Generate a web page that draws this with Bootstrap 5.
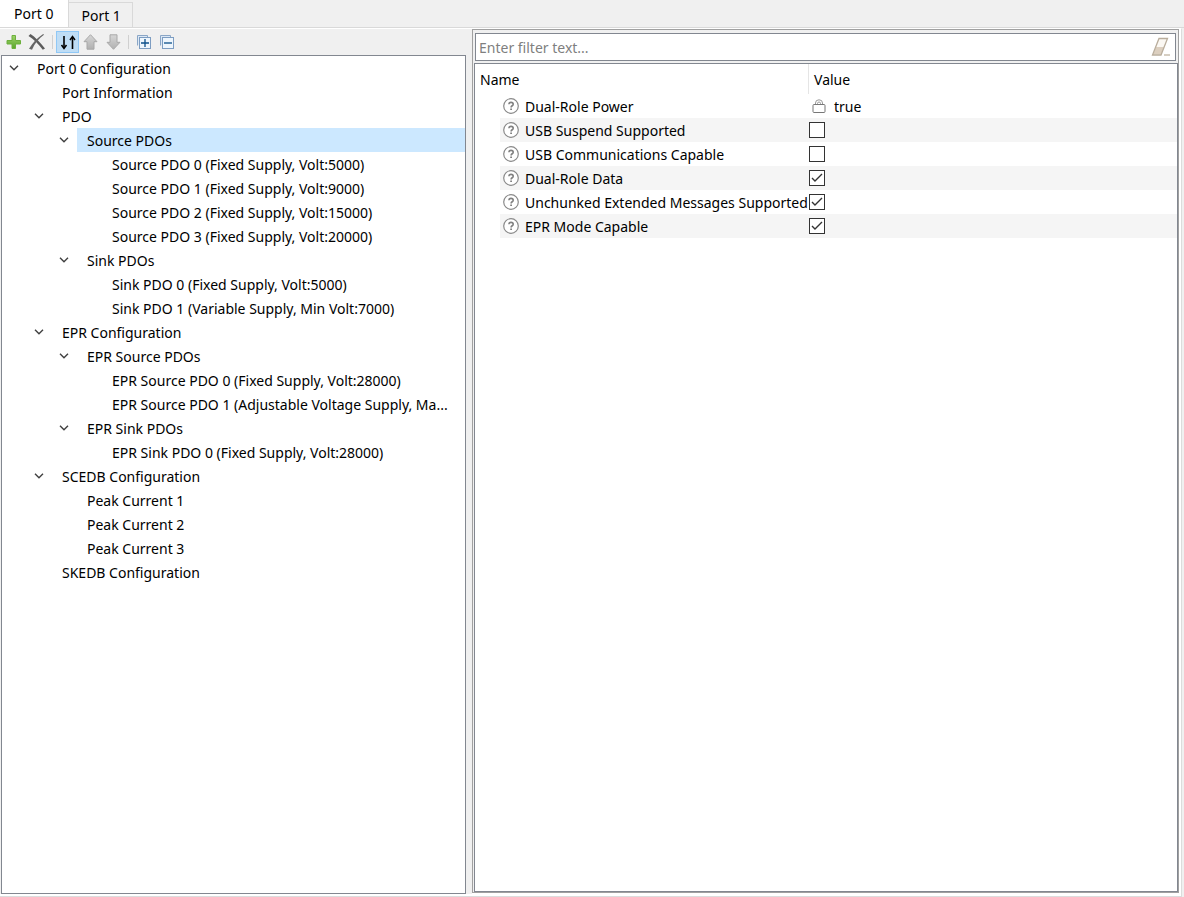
<!DOCTYPE html>
<html lang="en">
<head>
<meta charset="utf-8">
<meta name="viewport" content="width=device-width, initial-scale=1">
<title>Port Configuration</title>
<link rel="stylesheet" href="https://cdn.jsdelivr.net/npm/bootstrap@5.3.0/dist/css/bootstrap.min.css">
<script src="https://cdn.jsdelivr.net/npm/bootstrap@5.3.0/dist/js/bootstrap.bundle.min.js" defer></script>
<style>
  body { font: 14px/24px "Noto Sans", "Open Sans", sans-serif; color: #000; background: #f0f0f0; }
  svg { display: block; }

  .port-tabs { height: 28px; border-bottom: 1px solid #d9d9d9; }
  .port-tabs .nav-link { height: 25px; padding: 0 11px 0 12px; line-height: 25px; color: #000; border: 1px solid #d9d9d9; border-left: 0; border-bottom: 0; border-radius: 0; background: #f0f0f0; }
  .port-tabs .nav-link.active { height: 28px; padding: 0 15px 0 14px; line-height: 28px; background: #fff; }

  .workspace { border: 1px solid #dcdcdc; border-width: 1px 1px 1px 0; border-top-color: #fff; margin-right: 2px; padding: 0 2px 2px 0; background: #fff; }
  .tree-pane { flex: 465 1 0; background: #f0f0f0; padding-left: 1px; }
  .sash { width: 6px; background: #f0f0f0; }
  .prop-pane { flex: 704 1 0; border: 1px solid #a0a0a0; background: #f0f0f0; padding: 1px 0 0 1px; margin-bottom: 1px; }

  .tool-strip { height: 26px; padding: 2px 0 2px 1px; }
  .tool-strip button { width: 23px; height: 22px; padding: 0; border: 1px solid transparent; background: none; display: flex; align-items: center; justify-content: center; }
  .tool-strip button.on { background: #bfddf5; border-color: #90c8f6; }
  .tool-strip .divider { width: 1px; height: 14px; margin: 0 3px; background: #d0d0d0; }

  .sunken { border: 1px solid #828790; background: #fff; }
  .tree ul { list-style: none; margin: 0; padding: 0 0 0 25px; }
  .tree > ul { padding: 0; }
  .node { display: flex; height: 24px; white-space: nowrap; }
  .node .twisty { width: 25px; height: 24px; flex: none; padding: 0 0 0 7px; border: 0; background: none; }
  .node .caption { flex: 1; min-width: 0; overflow: hidden; padding-left: 10px; line-height: 26px; color: #000; text-decoration: none; }
  .node .caption.selected { background: #cce8ff; }

  .filter-box { height: 28px; border: 1px solid #828790; margin: 2px 2px 2px 1px; background: #fff; }
  .filter-box input { font: inherit; height: 26px; padding: 0 3px; border: 0; outline: 0; background: none; }
  .filter-box input::placeholder { color: #7f7f7f; opacity: 1; }
  .filter-box button { padding: 0 4px 0 0; border: 0; background: none; }

  .props { width: 100%; table-layout: fixed; border-collapse: separate; border-spacing: 0; }
  .props th { height: 30px; padding: 1px 5px 0; font-weight: 400; }
  .props thead th + th { border-left: 1px solid #e5e5e5; }
  .props td { height: 24px; padding: 0; white-space: nowrap; }
  .props tbody tr:nth-child(even) td:not(:first-child) { background: #f5f5f5; }
  .props .cell { display: flex; align-items: center; height: 24px; }
  .props .pname { gap: 6px; padding-left: 3px; }
  .props .ptext { padding-top: 2px; }
  .props input[type=checkbox] { appearance: none; width: 16px; height: 16px; margin: 0 0 0 1px; border: 1px solid #333; background: #fff; }
  .props input[type=checkbox]:checked { background: #fff url("data:image/svg+xml,%3Csvg xmlns='http://www.w3.org/2000/svg' viewBox='0 0 14 14'%3E%3Cpath d='M2 7l3 3 7-7' fill='none' stroke='%23333' stroke-width='1.4'/%3E%3C/svg%3E"); }
</style>
</head>
<body class="d-flex flex-column vh-100 overflow-hidden">

<svg width="0" height="0" class="position-absolute" aria-hidden="true">
  <defs>
    <linearGradient id="gGreen" x1="0" y1="0" x2="0" y2="1"><stop offset="0" stop-color="#9ed36a"/><stop offset="1" stop-color="#5aa52c"/></linearGradient>
    <linearGradient id="gGrey" x1="0" y1="0" x2="0" y2="1"><stop offset="0" stop-color="#d6d6d6"/><stop offset="1" stop-color="#b0b0b0"/></linearGradient>
    <symbol id="chev" viewBox="0 0 10 6"><path d="M1 .8l4 4 4-4" fill="none" stroke="#404040" stroke-width="1.4"/></symbol>
    <symbol id="help" viewBox="0 0 16 16"><circle cx="8" cy="8" r="7.3" fill="#fff" stroke="#8a8a8a" stroke-width="1.2"/><path d="M5.9 6.3c0-2.6 4.3-2.5 4.3-.1 0 1.6-2.1 1.5-2.1 3.2" fill="none" stroke="#808080" stroke-width="1.6"/><path d="M7.2 10.4h1.8v1.7H7.2z" fill="#808080"/></symbol>
  </defs>
</svg>

<nav class="port-tabs nav flex-nowrap align-items-end flex-shrink-0" aria-label="Ports">
  <a class="nav-link active" href="#port0" aria-current="page">Port 0</a>
  <a class="nav-link" href="#port1">Port 1</a>
</nav>

<main class="workspace d-flex flex-grow-1 overflow-hidden">
  <section class="tree-pane d-flex flex-column overflow-hidden" id="port0">
    <div class="tool-strip d-flex align-items-center flex-shrink-0" role="toolbar" aria-label="Tree actions">
      <button type="button" aria-label="Add"><svg width="16" height="16" viewBox="0 0 16 16"><path d="M6 1.500h3.500v5h5v3.500h-5v4.500h-3.500v-4.500h-5v-3.500h5z" fill="url(#gGreen)" stroke="#6db03d"/></svg></button>
      <button type="button" aria-label="Delete"><svg width="18" height="16" viewBox="0 0 18 16"><path d="M2.500 0C7 3 12 8 17 14.500L14.800 15.800C10.500 10 6 5.500 .5 2z" fill="#5c5c5c"/><path d="M16 .8C11 4.500 6.500 9.500 4 15.800L1 14.800C5 8.500 9.500 3.500 15.200 0z" fill="#666"/></svg></button>
      <span class="divider ms-1"></span>
      <button type="button" class="on" aria-label="Sort" aria-pressed="true"><svg width="18" height="18" viewBox="0 0 18 18"><path d="M5 3v12M13.500 16V4" fill="none" stroke="#000" stroke-width="1.600"/><path d="M2.500 12l2.500 3.500 2.500-3.500M11 7l2.500-3.500L16 7" fill="none" stroke="#000" stroke-width="1.500"/></svg></button>
      <button type="button" aria-label="Move up"><svg width="16" height="16" viewBox="0 0 16 16"><path d="M7.500 .7l6.500 7H11v7.500h-7V7.700H1z" fill="url(#gGrey)" stroke="#a8a8a8"/></svg></button>
      <button type="button" aria-label="Move down"><svg width="16" height="16" viewBox="0 0 16 16"><path d="M7.500 15.300l6.500-7H11V.8h-7v7.500H1z" fill="url(#gGrey)" stroke="#a8a8a8"/></svg></button>
      <span class="divider"></span>
      <button type="button" aria-label="Expand all"><svg width="14" height="14" viewBox="0 0 14 14"><path d="M.5 10.500V.5h10v2" fill="#dce8f5" stroke="#8aa6c6"/><rect x="2.500" y="2.500" width="11" height="11" fill="#eef6fd" stroke="#7d9dc2"/><path d="M4 8h8M8 4v8" stroke="#0b4f8a" stroke-width="1.300"/></svg></button>
      <button type="button" aria-label="Collapse all"><svg width="14" height="14" viewBox="0 0 14 14"><path d="M.5 10.500V.5h10v2" fill="#dce8f5" stroke="#8aa6c6"/><rect x="2.500" y="2.500" width="11" height="11" fill="#eef6fd" stroke="#7d9dc2"/><path d="M4 8h8" stroke="#0b4f8a" stroke-width="1.300"/></svg></button>
    </div>
    <div class="tree sunken flex-grow-1 overflow-hidden">
      <ul id="portTree"></ul>
    </div>
  </section>

  <div class="sash"></div>

  <section class="prop-pane d-flex flex-column overflow-hidden">
    <div class="filter-box d-flex align-items-center flex-shrink-0">
      <input type="text" class="flex-grow-1" placeholder="Enter filter text..." aria-label="Filter">
      <button type="button" aria-label="Clear filter"><svg width="20" height="20" viewBox="0 0 20 20"><path d="M8 1.500h8.500l-6.500 16.500H1.500z" fill="#fbf8f3"/><path d="M5 10h8l-3 7.500H2z" fill="#dccfbf"/><path d="M8 1.500h8.500L10 18H1.500z" fill="none" stroke="#b9ad9c" stroke-width="1.300"/><path d="M13 18h6" stroke="#c5b9a8" stroke-width="1.400"/></svg></button>
    </div>
    <div class="sunken flex-grow-1 overflow-hidden">
      <table class="props">
        <colgroup><col style="width:25px"><col style="width:308px"><col></colgroup>
        <thead><tr><th colspan="2" scope="col">Name</th><th scope="col">Value</th></tr></thead>
        <tbody id="propRows"></tbody>
      </table>
    </div>
  </section>
</main>

<script>
  const nodes = [
    ["Port 0 Configuration", [
      ["Port Information"],
      ["PDO", [
        ["Source PDOs", [
          ["Source PDO 0 (Fixed Supply, Volt:5000)"],
          ["Source PDO 1 (Fixed Supply, Volt:9000)"],
          ["Source PDO 2 (Fixed Supply, Volt:15000)"],
          ["Source PDO 3 (Fixed Supply, Volt:20000)"]]],
        ["Sink PDOs", [
          ["Sink PDO 0 (Fixed Supply, Volt:5000)"],
          ["Sink PDO 1 (Variable Supply, Min Volt:7000)"]]]]],
      ["EPR Configuration", [
        ["EPR Source PDOs", [
          ["EPR Source PDO 0 (Fixed Supply, Volt:28000)"],
          ["EPR Source PDO 1 (Adjustable Voltage Supply, Ma..."]]],
        ["EPR Sink PDOs", [
          ["EPR Sink PDO 0 (Fixed Supply, Volt:28000)"]]]]],
      ["SCEDB Configuration", [["Peak Current 1"], ["Peak Current 2"], ["Peak Current 3"]]],
      ["SKEDB Configuration"]]]
  ];
  const chevron = '<svg width="10" height="6"><use href="#chev"/></svg>';
  const branch = list => list.map(([label, kids]) =>
    `<li><div class="node">${kids ? `<button type="button" class="twisty" aria-expanded="true" aria-label="Toggle ${label}">${chevron}</button>` : '<span class="twisty"></span>'}` +
    `<a href="#" class="caption${label === "Source PDOs" ? " selected" : ""}">${label}</a></div>${kids ? `<ul>${branch(kids)}</ul>` : ""}</li>`).join("");
  document.getElementById("portTree").innerHTML = branch(nodes);

  const props = [
    ["Dual-Role Power", "true"],
    ["USB Suspend Supported", false],
    ["USB Communications Capable", false],
    ["Dual-Role Data", true],
    ["Unchunked Extended Messages Supported", true],
    ["EPR Mode Capable", true]
  ];
  const lock = '<svg class="ms-1 me-2" width="14" height="14" viewBox="0 0 14 14"><path d="M3.500 6V4a3.500 3.200 0 0 1 7 0v2M5.500 6V4.500a1.500 1.500 0 0 1 3 0V6" fill="none" stroke="#999"/><rect x="1" y="5.500" width="12" height="8" rx="1" fill="#fff" stroke="#777"/></svg>';
  document.getElementById("propRows").innerHTML = props.map(([name, value], i) => {
    const help = '<svg width="16" height="16" class="flex-shrink-0"><use href="#help"/></svg>';
    const isText = typeof value === "string";
    return `<tr><td></td><td><span class="cell pname">${help}${isText ? `<span class="ptext">${name}</span>` : `<label class="ptext" for="p${i}">${name}</label>`}</span></td>` +
      `<td><span class="cell">${isText ? `${lock}<span class="ptext">${value}</span>` : `<input type="checkbox" id="p${i}"${value ? " checked" : ""}>`}</span></td></tr>`;
  }).join("");
</script>
</body>
</html>
